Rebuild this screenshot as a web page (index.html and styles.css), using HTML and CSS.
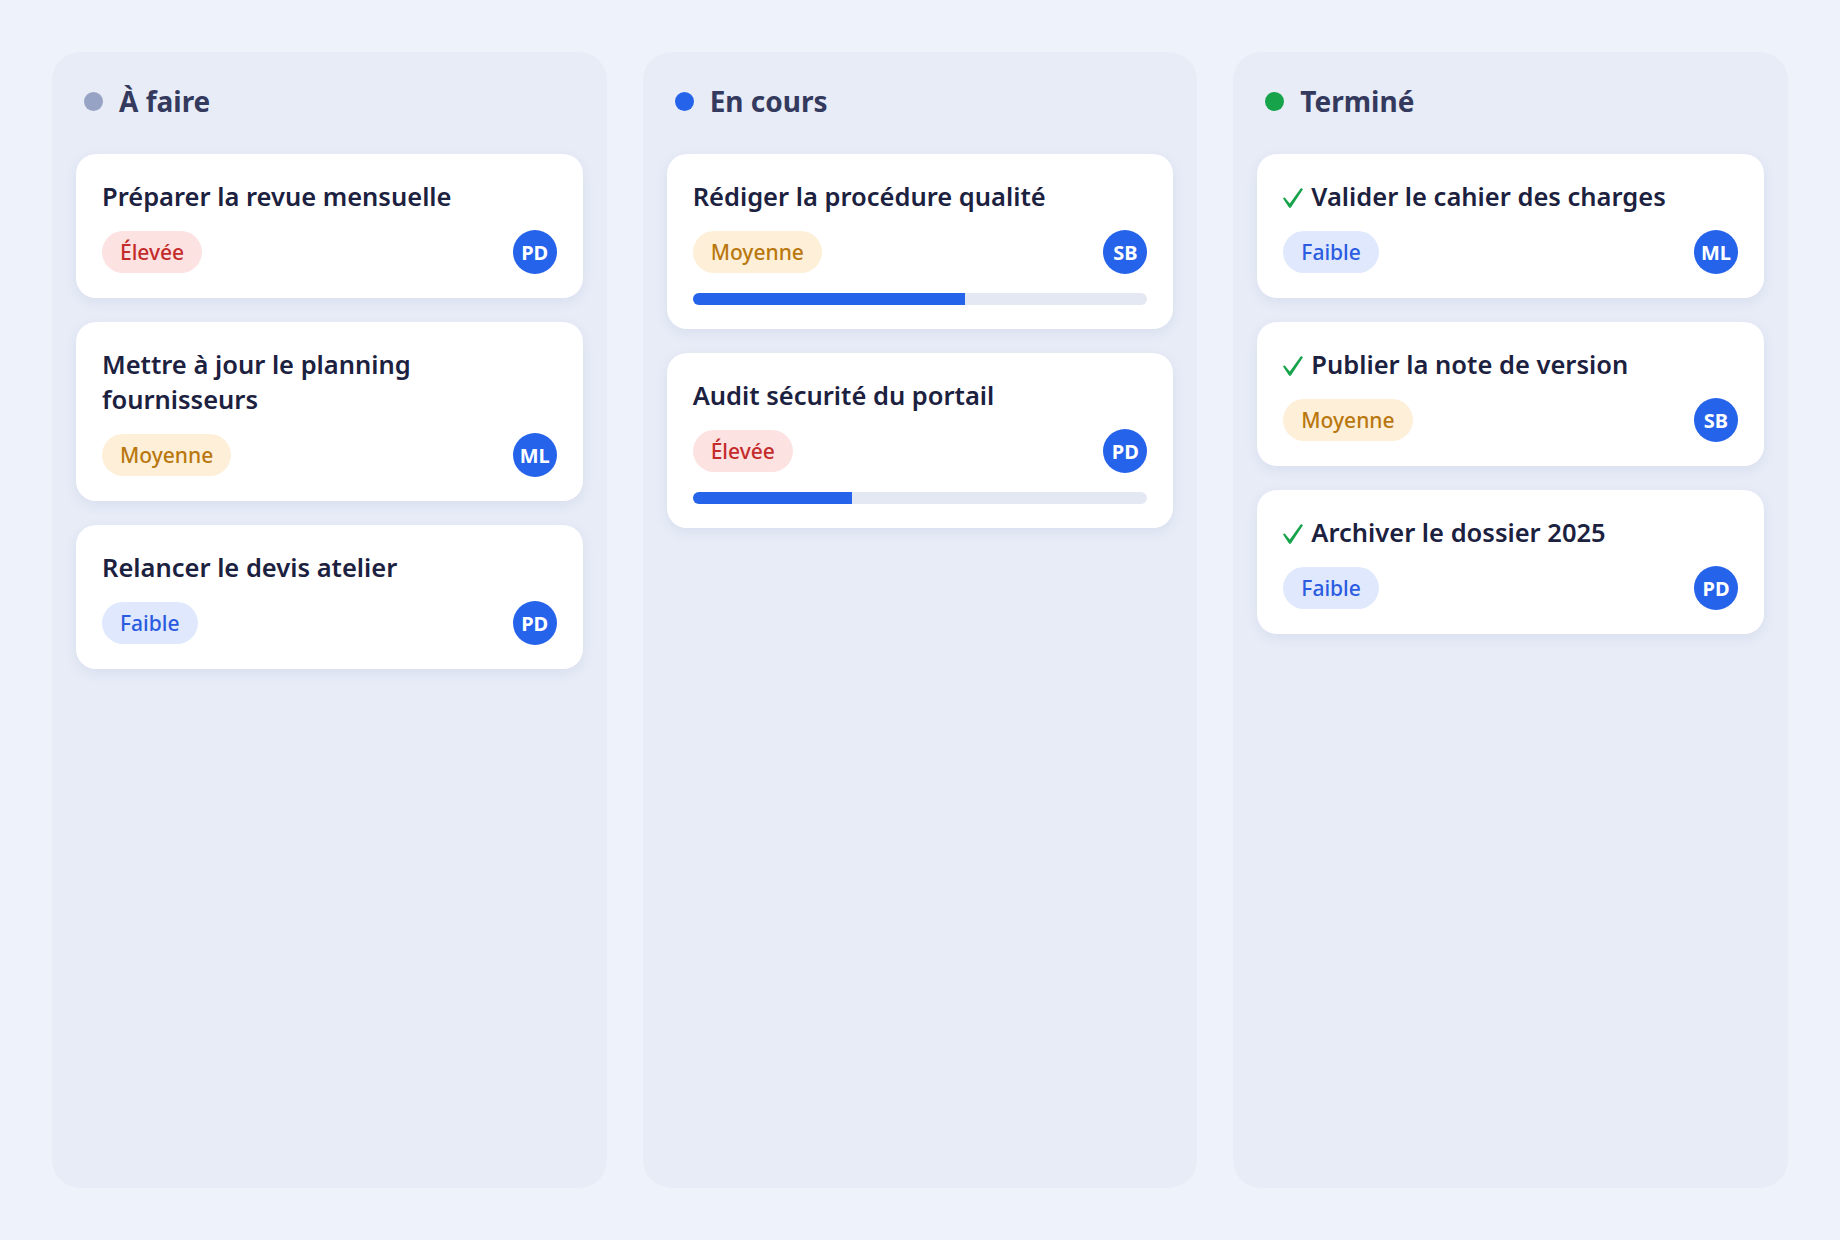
FILE: index.html
```html
<!DOCTYPE html>
<html lang="fr">
<head>
    <meta charset="UTF-8">
    <meta name="viewport" content="width=device-width, initial-scale=1.0">
    <title>Tableau des tâches</title>
    <link rel="stylesheet" href="styles.css">
</head>
<body>
    <div class="board">
        <!-- colonne 1 -->
        <section class="column">
            <div class="column-head">
                <span class="dot dot-todo"></span>
                <h2>À faire</h2>
            </div>
            <div class="cards">
                <div class="card">
                    <h3 class="card-title">Préparer la revue mensuelle</h3>
                    <div class="card-meta">
                        <span class="badge badge-high">Élevée</span>
                        <span class="avatar">PD</span>
                    </div>
                </div>
                <div class="card">
                    <h3 class="card-title">Mettre à jour le planning fournisseurs</h3>
                    <div class="card-meta">
                        <span class="badge badge-mid">Moyenne</span>
                        <span class="avatar">ML</span>
                    </div>
                </div>
                <div class="card">
                    <h3 class="card-title">Relancer le devis atelier</h3>
                    <div class="card-meta">
                        <span class="badge badge-low">Faible</span>
                        <span class="avatar">PD</span>
                    </div>
                </div>
            </div>
        </section>

        <!-- colonne 2 -->
        <section class="column">
            <div class="column-head">
                <span class="dot dot-doing"></span>
                <h2>En cours</h2>
            </div>
            <div class="cards">
                <div class="card">
                    <h3 class="card-title">Rédiger la procédure qualité</h3>
                    <div class="card-meta">
                        <span class="badge badge-mid">Moyenne</span>
                        <span class="avatar">SB</span>
                    </div>
                    <div class="progress"><div class="progress-bar" style="width: 60%"></div></div>
                </div>
                <div class="card">
                    <h3 class="card-title">Audit sécurité du portail</h3>
                    <div class="card-meta">
                        <span class="badge badge-high">Élevée</span>
                        <span class="avatar">PD</span>
                    </div>
                    <div class="progress"><div class="progress-bar" style="width: 35%"></div></div>
                </div>
            </div>
        </section>

        <!-- colonne 3 -->
        <section class="column">
            <div class="column-head">
                <span class="dot dot-done"></span>
                <h2>Terminé</h2>
            </div>
            <div class="cards">
                <div class="card">
                    <h3 class="card-title"><svg class="check" viewBox="0 0 20 20"><path d="M0 10.4 L1.5 9.3 L6.8 15.6 L18 0 L20 1.3 L7.7 19.8 L6.2 19.8 Z"/></svg>Valider le cahier des charges</h3>
                    <div class="card-meta">
                        <span class="badge badge-low">Faible</span>
                        <span class="avatar">ML</span>
                    </div>
                </div>
                <div class="card">
                    <h3 class="card-title"><svg class="check" viewBox="0 0 20 20"><path d="M0 10.4 L1.5 9.3 L6.8 15.6 L18 0 L20 1.3 L7.7 19.8 L6.2 19.8 Z"/></svg>Publier la note de version</h3>
                    <div class="card-meta">
                        <span class="badge badge-mid">Moyenne</span>
                        <span class="avatar">SB</span>
                    </div>
                </div>
                <div class="card">
                    <h3 class="card-title"><svg class="check" viewBox="0 0 20 20"><path d="M0 10.4 L1.5 9.3 L6.8 15.6 L18 0 L20 1.3 L7.7 19.8 L6.2 19.8 Z"/></svg>Archiver le dossier 2025</h3>
                    <div class="card-meta">
                        <span class="badge badge-low">Faible</span>
                        <span class="avatar">PD</span>
                    </div>
                </div>
            </div>
        </section>
    </div>
</body>
</html>
```

FILE: styles.css
```css
body{
    margin: 0;
    background-color: #eef2fb;
    font-family: "Segoe UI", "Noto Sans", sans-serif;
    color: #1c2140;
}
.board{
    display: grid;
    grid-template-columns: repeat(3, 1fr);
    gap: 36px;
    padding: 52px;
    height: 100vh;
    box-sizing: border-box;
}
.column{
    background-color: #e7ecf7;
    border-radius: 28px;
    padding: 24px;
}
.column-head{
    display: flex;
    align-items: center;
    gap: 16px;
    height: 50px;
    padding: 0 8px;
    margin-bottom: 28px;
}
.column-head h2{
    margin: 0;
    font-size: 28px;
    font-weight: 700;
    color: #343a5e;
}
.dot{
    width: 19px;
    height: 19px;
    border-radius: 50%;
}
.dot-todo{ background-color: #97a3c4; }
.dot-doing{ background-color: #2563eb; }
.dot-done{ background-color: #16a34a; }

.cards{
    display: flex;
    flex-direction: column;
    gap: 24px;
}
.card{
    background-color: white;
    border-radius: 20px;
    padding: 25px 26px 24px;
    box-shadow: 0 4px 14px rgba(40, 60, 120, 0.07);
}
.card-title{
    margin: 0 0 16px;
    font-size: 25.5px;
    line-height: 35px;
    font-weight: 600;
}
.check{
    width: 20px;
    height: 20px;
    margin-right: 8px;
    fill: #16a34a;
    vertical-align: -2px;
}
.card-meta{
    display: flex;
    justify-content: space-between;
    align-items: center;
}
.badge{
    height: 42px;
    line-height: 42px;
    padding: 0 18px;
    border-radius: 21px;
    font-size: 21px;
    font-weight: 500;
}
.badge-high{ background-color: #fde2e2; color: #c42b2b; }
.badge-mid{ background-color: #fdefd8; color: #b9770e; }
.badge-low{ background-color: #dfe8fd; color: #2a5be0; }

.avatar{
    width: 44px;
    height: 44px;
    border-radius: 50%;
    background-color: #2563eb;
    color: white;
    font-size: 20px;
    font-weight: 700;
    display: flex;
    align-items: center;
    justify-content: center;
}
.progress{
    height: 12px;
    margin-top: 19px;
    background-color: #e3e8f3;
    border-radius: 6px;
    overflow: hidden;
}
.progress-bar{
    height: 100%;
    background-color: #2563eb;
}
```
